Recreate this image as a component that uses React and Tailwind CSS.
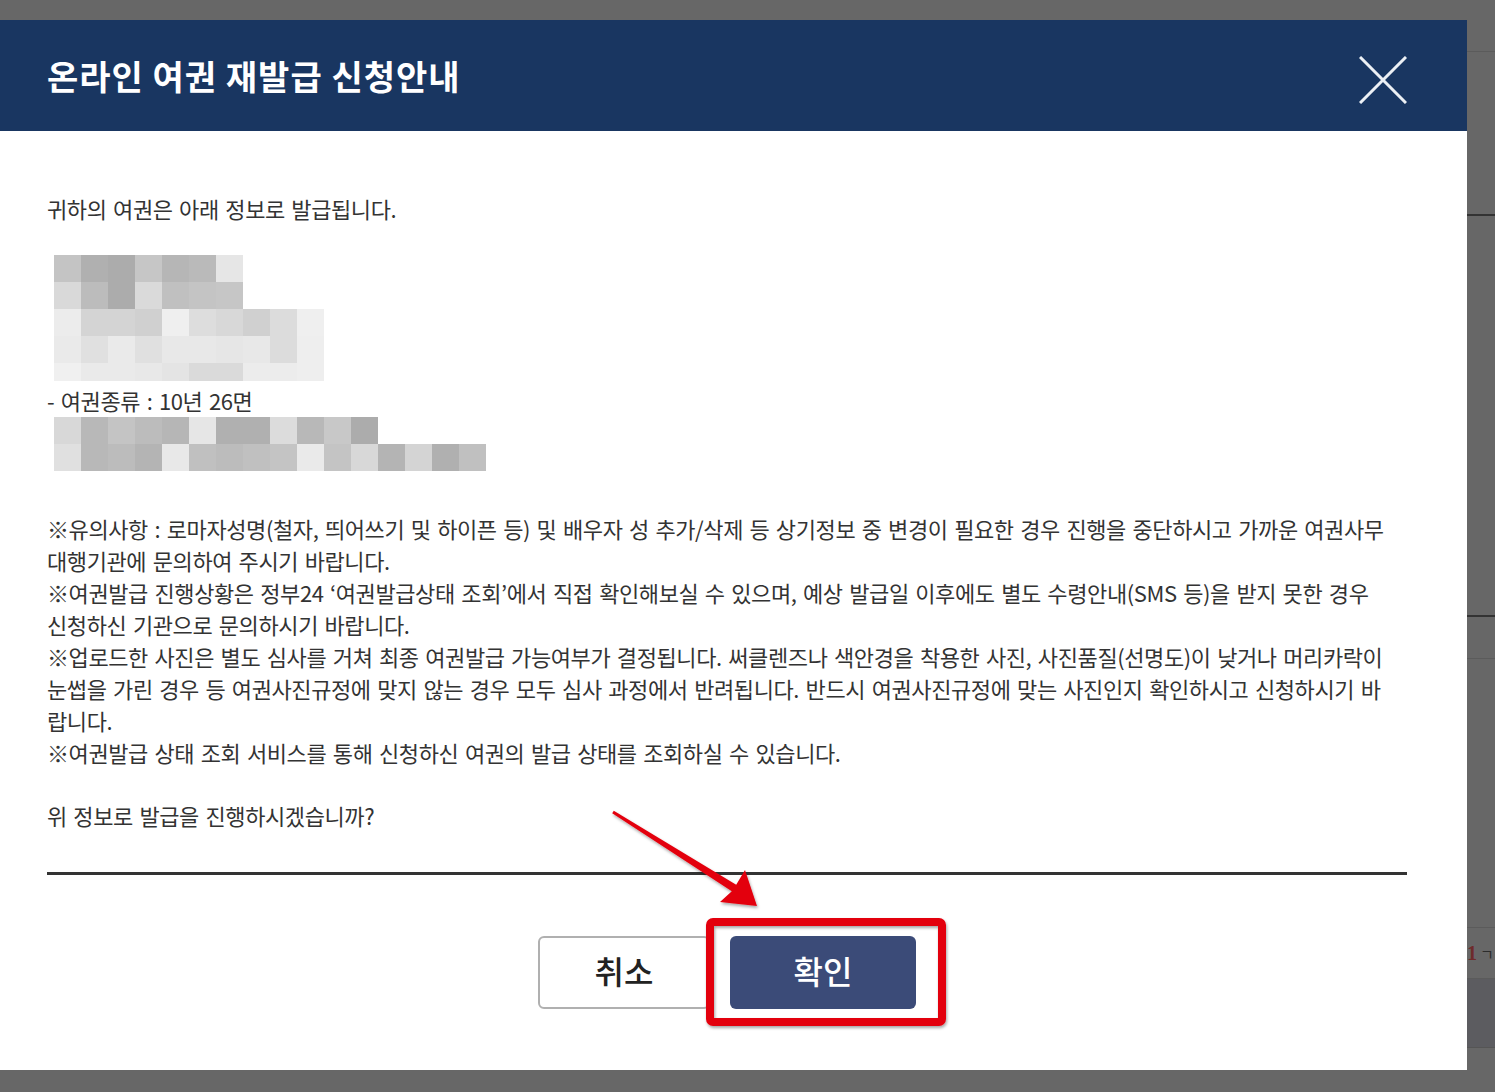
import React from "react";

const block1 = [
  { h: "h-[27px]", cells: ["bg-[#c4c4c4]", "bg-[#b0b0b0]", "bg-[#acacac]", "bg-[#c6c6c6]", "bg-[#b6b6b6]", "bg-[#bababa]", "bg-[#e6e6e6]"] },
  { h: "h-[27px]", cells: ["bg-[#d9d9d9]", "bg-[#bcbcbc]", "bg-[#acacac]", "bg-[#dadada]", "bg-[#c0c0c0]", "bg-[#c4c4c4]", "bg-[#c6c6c6]"] },
  { h: "h-[27px]", cells: ["bg-[#ececec]", "bg-[#d4d4d4]", "bg-[#d4d4d4]", "bg-[#d0d0d0]", "bg-[#efefef]", "bg-[#dddddd]", "bg-[#d8d8d8]", "bg-[#d0d0d0]", "bg-[#dcdcdc]", "bg-[#efefef]"] },
  { h: "h-[27px]", cells: ["bg-[#eaeaea]", "bg-[#e0e0e0]", "bg-[#eaeaea]", "bg-[#e0e0e0]", "bg-[#e8e8e8]", "bg-[#e8e8e8]", "bg-[#e6e6e6]", "bg-[#e8e8e8]", "bg-[#dcdcdc]", "bg-[#eeeeee]"] },
  { h: "h-[18px]", cells: ["bg-[#f0f0f0]", "bg-[#eaeaea]", "bg-[#eaeaea]", "bg-[#e8e8e8]", "bg-[#e4e4e4]", "bg-[#dadada]", "bg-[#dadada]", "bg-[#ececec]", "bg-[#ececec]", "bg-[#eeeeee]"] },
];

const block2 = [
  { h: "h-[27px]", cells: ["bg-[#d8d8d8]", "bg-[#b8b8b8]", "bg-[#c4c4c4]", "bg-[#bcbcbc]", "bg-[#b6b6b6]", "bg-[#e6e6e6]", "bg-[#b0b0b0]", "bg-[#b0b0b0]", "bg-[#dcdcdc]", "bg-[#b8b8b8]", "bg-[#c8c8c8]", "bg-[#acacac]"] },
  { h: "h-[27px]", cells: ["bg-[#e0e0e0]", "bg-[#b8b8b8]", "bg-[#bcbcbc]", "bg-[#b4b4b4]", "bg-[#e8e8e8]", "bg-[#c0c0c0]", "bg-[#bcbcbc]", "bg-[#c0c0c0]", "bg-[#c4c4c4]", "bg-[#eaeaea]", "bg-[#c4c4c4]", "bg-[#d8d8d8]", "bg-[#b4b4b4]", "bg-[#d4d4d4]", "bg-[#b0b0b0]", "bg-[#c0c0c0]"] },
];

const notes = [
  "※유의사항 : 로마자성명(철자, 띄어쓰기 및 하이픈 등) 및 배우자 성 추가/삭제 등 상기정보 중 변경이 필요한 경우 진행을 중단하시고 가까운 여권사무",
  "대행기관에 문의하여 주시기 바랍니다.",
  "※여권발급 진행상황은 정부24 ‘여권발급상태 조회’에서 직접 확인해보실 수 있으며, 예상 발급일 이후에도 별도 수령안내(SMS 등)을 받지 못한 경우",
  "신청하신 기관으로 문의하시기 바랍니다.",
  "※업로드한 사진은 별도 심사를 거쳐 최종 여권발급 가능여부가 결정됩니다. 써클렌즈나 색안경을 착용한 사진, 사진품질(선명도)이 낮거나 머리카락이",
  "눈썹을 가린 경우 등 여권사진규정에 맞지 않는 경우 모두 심사 과정에서 반려됩니다. 반드시 여권사진규정에 맞는 사진인지 확인하시고 신청하시기 바",
  "랍니다.",
  "※여권발급 상태 조회 서비스를 통해 신청하신 여권의 발급 상태를 조회하실 수 있습니다.",
];

function Mosaic({ rows }) {
  return (
    <div className="ml-[7px] flex flex-col">
      {rows.map((row, i) => (
        <div key={i} className={`flex ${row.h}`}>
          {row.cells.map((c, j) => (
            <div key={j} className={`w-[27px] h-full ${c}`} />
          ))}
        </div>
      ))}
    </div>
  );
}

function BackdropStrip() {
  return (
    <div className="flex-1 flex flex-col overflow-hidden">
      <div className="h-[51px]" />
      <div className="h-px bg-[#5b5b5b]" />
      <div className="h-[162px]" />
      <div className="h-[2px] bg-[#333333]" />
      <div className="h-[399px]" />
      <div className="h-[2px] bg-[#333333]" />
      <div className="h-[41px]" />
      <div className="h-px bg-[#5b5b5b]" />
      <div className="h-[268px]" />
      <div className="h-px bg-[#5b5b5b]" />
      <div className="h-[50px] flex items-center whitespace-nowrap text-[15px] leading-none">
        <span className="font-bold text-[#6e2b2b] font-['Liberation_Serif',serif] text-[20px]">1</span>
        <span className="ml-[3px] text-[#2c2c2c]">ㄱ</span>
      </div>
      <div className="h-px bg-[#5b5b5b]" />
      <div className="h-[68px] bg-[#5c5c60]" />
      <div className="h-px bg-[#555555]" />
    </div>
  );
}

function Annotation() {
  return (
    <svg className="absolute inset-0 pointer-events-none" width="1495" height="1092" viewBox="0 0 1495 1092">
      <defs>
        <filter id="sh" x="-20%" y="-20%" width="140%" height="140%">
          <feDropShadow dx="1" dy="2" stdDeviation="1.5" floodColor="#000" floodOpacity="0.35" />
        </filter>
      </defs>
      <rect x="710" y="922" width="232" height="100" rx="3" fill="none" stroke="#e3000f" strokeWidth="8" filter="url(#sh)" />
      <path
        d="M613.8 810.7 L736.2 884.7 L745 870 L757 906 L720 902 L731.8 891.3 L612.2 813.3 Z"
        fill="#e3000f"
        filter="url(#sh)"
      />
    </svg>
  );
}

export default function App() {
  return (
    <div className="relative h-[1092px] w-full bg-[#676767] flex font-['Noto_Sans_CJK_KR',sans-serif] overflow-hidden">
      <div className="w-[1467px] pt-[20px] shrink-0">
        <div className="h-[1050px] bg-white flex flex-col">
          {/* Header */}
          <div className="h-[111px] bg-[#193661] flex items-center justify-between pl-[47px] pr-[60px]">
            <h1 className="text-white text-[34px] font-bold tracking-[1px] leading-none">
              온라인 여권 재발급 신청안내
            </h1>
            <svg className="mt-[8px]" width="48" height="48" viewBox="0 0 48 48">
              <path d="M1 1 L47 47 M47 1 L1 47" stroke="#ecf0f5" strokeWidth="3" />
            </svg>
          </div>

          {/* Body */}
          <div className="pl-[47px] pr-[60px] pt-[61px] text-[#333333] text-[22px] tracking-[-0.4px] [word-spacing:2px]">
            <p className="leading-[32px]">귀하의 여권은 아래 정보로 발급됩니다.</p>
            <div className="mt-[31px]">
              <Mosaic rows={block1} />
            </div>
            <p className="leading-[32px] mt-[3px]">- 여권종류 : 10년 26면</p>
            <div className="mt-px">
              <Mosaic rows={block2} />
            </div>

            <div className="mt-[41px] leading-[32px] whitespace-nowrap">
              {notes.map((line, i) => (
                <p key={i}>{line}</p>
              ))}
            </div>

            <p className="mt-[31px] leading-[32px]">위 정보로 발급을 진행하시겠습니까?</p>

            <div className="mt-[41px] h-[3px] bg-[#333333]" />

            <div className="mt-[61px] flex justify-center gap-[20px] tracking-normal [word-spacing:0px]">
              <button className="w-[172px] h-[73px] pb-[6px] rounded-[6px] border-2 border-[#b0b0b0] bg-white text-[32px] leading-none text-[#222222] font-medium">
                취소
              </button>
              <button className="w-[186px] h-[73px] pb-[6px] rounded-[6px] bg-[#3b4b78] text-[32px] leading-none text-white font-medium">
                확인
              </button>
            </div>
          </div>
        </div>
      </div>
      <BackdropStrip />
      <Annotation />
    </div>
  );
}
